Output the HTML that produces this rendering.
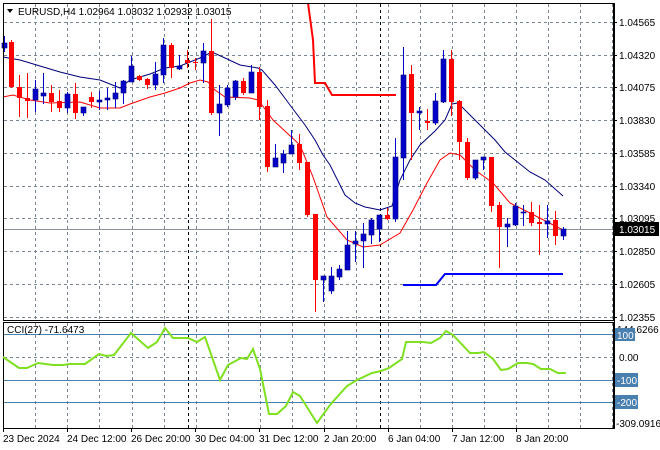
<!DOCTYPE html>
<html><head><meta charset="utf-8"><style>
html,body{margin:0;padding:0;background:#fff;width:660px;height:450px;overflow:hidden}
svg{display:block;font-family:"Liberation Sans",sans-serif;font-size:10px}
</style></head><body>
<svg id="s" width="660" height="450" xmlns="http://www.w3.org/2000/svg">
<rect width="660" height="450" fill="#fff"/>
<g id="grid" stroke="#7a8694" stroke-width="1" stroke-dasharray="3,3"></g>
<g id="seps" stroke="#000" stroke-width="1" stroke-dasharray="3,3"></g>
<line x1="3" y1="229.5" x2="614" y2="229.5" stroke="#8a939c"/>
<!-- MAs -->
<polyline fill="none" stroke="#00007a" stroke-width="1" points="3,57 20,60 40,66 60,72 80,77 100,80 115,86 120,88 130,80 150,74 165,68 180,66 200,58 212,52 225,58 240,65 258,68 262,70 275,85 290,105 305,125 315,140 323,155 330,165 340,185 345,195 355,203 365,207 380,210 392,206 400,180 410,160 420,145 435,131 445,120 452,104 458,103 470,115 485,130 495,140 505,152 515,160 530,172 545,180 563,196"/>
<polyline fill="none" stroke="#ff0000" stroke-width="1" points="3,97 13,95 30,100 50,103 80,102 100,108 120,108 130,104 150,97 165,93 180,88 190,83 200,80 208,82 215,90 225,97 250,98 258,100 262,105 273,120 287,133 300,145 313,177 327,217 347,240 363,247 380,245 400,233 413,210 427,183 440,160 450,153 460,155 475,170 493,183 510,203 530,213 563,230"/>
<polyline fill="none" stroke="#ff0000" stroke-width="2" points="308,3 313,40 315,83 325,83 332,95 396,95"/>
<polyline fill="none" stroke="#0000ff" stroke-width="2" points="403,285 436,285 445,274 563,274"/>
<g id="candles"></g>
<!-- frames -->
<rect x="3.5" y="3.5" width="610" height="317" fill="none" stroke="#000"/>
<rect x="3.5" y="322.5" width="610" height="106" fill="none" stroke="#000"/>
<line x1="614.5" y1="3" x2="614.5" y2="429" stroke="#000"/>
<!-- CCI levels -->
<line x1="4" y1="334.5" x2="613" y2="334.5" stroke="#4a80b0"/>
<line x1="4" y1="380.5" x2="613" y2="380.5" stroke="#4a80b0"/>
<line x1="4" y1="402.5" x2="613" y2="402.5" stroke="#4a80b0"/>
<line x1="4" y1="357.5" x2="613" y2="357.5" stroke="#7a8694" stroke-dasharray="3,3"/>
<polyline fill="none" stroke="#7fe020" stroke-width="2" points="3,357 19,368 27,368 38,363 53,365 63,365 70,364 85,364 99,354 106,356 114,355 131,333 148,348 157,342 165,328 173,338 188,338 197,342 205,337 220,380 228,365 241,358 247,359 253,349 260,369 269,414 277,414 286,406 293,392 300,396 317,423 330,405 347,386 357,380 372,373 381,371 389,368 402,359 406,342 423,342 431,343 440,338 446,331 453,335 470,353 478,353 484,352 493,359 501,370 508,369 518,363 527,363 533,364 541,369 550,369 558,373 566,373"/>
<text x="7" y="333" fill="#000">CCI(27) -71.6473</text>
<!-- title -->
<path d="M7,9 L13,9 L10,13 Z" fill="#000"/>
<text x="18" y="15" fill="#000">EURUSD,H4  1.02964 1.03032 1.02932 1.03015</text>
<!-- price axis -->
<g fill="#000" id="pax"></g>
<rect x="615" y="222" width="44" height="14" fill="#000"/>
<text x="619" y="233" fill="#fff">1.03015</text>
<text x="617" y="333" fill="#000">144.6266</text>
<text x="619" y="361" fill="#000">0.00</text>
<rect x="615" y="373" width="23" height="14" fill="#4a80b0"/><text x="617" y="384" fill="#fff">-100</text>
<rect x="615" y="395" width="23" height="14" fill="#4a80b0"/><text x="617" y="406" fill="#fff">-200</text>
<rect x="615" y="328" width="20" height="13" fill="#4a80b0"/><text x="617" y="339" fill="#fff">100</text>
<text x="616" y="427" fill="#000">-309.0916</text>
<g id="dax" fill="#000"></g>
</svg>
<script>
var NS="http://www.w3.org/2000/svg";
function el(p,t,a,txt){var e=document.createElementNS(NS,t);for(var k in a)e.setAttribute(k,a[k]);if(txt)e.textContent=txt;document.getElementById(p).appendChild(e);}
var hy=[22,55,87,120,153,186,218,251,284,317];
hy.forEach(function(y){el("grid","line",{x1:4,x2:613,y1:y+.5,y2:y+.5});});
var vx=[35,67,99,132,164,196,228,260,292,324,356,388,420,452,484,516,548,580,612];
vx.forEach(function(x){el("grid","line",{x1:x+.5,x2:x+.5,y1:4,y2:320});el("grid","line",{x1:x+.5,x2:x+.5,y1:323,y2:428});});
[188,380].forEach(function(x){el("seps","line",{x1:x+.5,x2:x+.5,y1:4,y2:320});el("seps","line",{x1:x+.5,x2:x+.5,y1:323,y2:428});});
var pl=["1.04565","1.04320","1.04075","1.03830","1.03585","1.03340","1.03095","1.02850","1.02605","1.02355"];
pl.forEach(function(t,i){el("pax","text",{x:619,y:hy[i]+4},t);el("pax","line",{x1:614,x2:617,y1:hy[i]+.5,y2:hy[i]+.5,stroke:"#000"});});
var dl=[[3,"23 Dec 2024"],[67,"24 Dec 12:00"],[131,"26 Dec 20:00"],[195,"30 Dec 04:00"],[259,"31 Dec 12:00"],[324,"2 Jan 20:00"],[388,"6 Jan 04:00"],[452,"7 Jan 12:00"],[516,"8 Jan 20:00"]];
dl.forEach(function(d){el("dax","text",{x:d[0],y:442},d[1]);el("dax","line",{x1:d[0]+.5,x2:d[0]+.5,y1:429,y2:432,stroke:"#000"});});
// x, bodyTop, bodyBot, wickTop, wickBot, color(b/r)
var C=[[4,43,48,36,52,"b"],[11,42,87,40,88,"r"],[19,87,98,75,117,"r"],[27,98,101,73,118,"r"],[35,89,100,80,112,"b"],[43,93,96,73,104,"b"],[51,93,102,85,112,"r"],[59,101,108,90,112,"r"],[67,94,108,92,113,"b"],[75,94,113,83,119,"r"],[83,107,113,107,116,"b"],[91,97,102,92,108,"r"],[99,100,102,91,110,"b"],[107,98,100,88,110,"b"],[115,93,99,82,108,"b"],[123,81,93,80,104,"b"],[131,66,82,56,82,"b"],[139,76,80,75,81,"r"],[147,79,85,78,89,"r"],[155,74,85,62,90,"b"],[163,45,75,38,83,"b"],[171,45,68,43,78,"r"],[179,66,69,55,70,"b"],[187,60,63,50,68,"r"],[195,62,63,58,70,"r"],[203,51,63,43,83,"b"],[211,51,113,19,115,"r"],[219,104,113,85,136,"b"],[227,88,105,85,107,"b"],[235,81,97,80,100,"b"],[243,81,93,78,95,"r"],[251,72,93,65,93,"b"],[259,72,107,67,120,"r"],[267,106,167,100,172,"r"],[275,158,167,144,167,"b"],[283,154,163,150,173,"b"],[291,145,154,130,154,"b"],[299,144,163,134,170,"r"],[307,162,215,162,217,"r"],[315,214,280,214,312,"r"],[323,276,280,276,302,"b"],[331,276,291,267,294,"b"],[339,269,277,265,280,"b"],[347,245,270,231,270,"b"],[355,241,244,231,262,"b"],[363,234,241,223,268,"b"],[371,220,235,218,244,"b"],[379,215,229,215,242,"b"],[387,215,219,208,220,"r"],[395,157,219,138,222,"b"],[403,75,158,47,180,"b"],[411,74,113,65,160,"r"],[419,111,113,107,130,"b"],[427,121,123,109,130,"r"],[435,101,123,93,125,"b"],[443,59,102,50,103,"b"],[451,59,102,50,116,"r"],[459,101,142,100,160,"r"],[467,142,178,138,180,"r"],[475,160,178,160,180,"b"],[483,157,160,157,170,"b"],[491,157,206,157,212,"r"],[499,205,227,202,268,"r"],[507,224,227,218,247,"b"],[515,206,225,203,226,"b"],[523,212,213,205,226,"b"],[531,212,223,202,226,"r"],[539,222,224,205,255,"r"],[547,221,224,205,238,"b"],[555,220,236,211,245,"r"],[563,229,236,227,240,"b"]];
C.forEach(function(c){var col=c[5]=="r"?"#ff0000":"#0000c8";
el("candles","line",{x1:c[0]+.5,x2:c[0]+.5,y1:c[3],y2:c[4],stroke:col});
var h=Math.max(1,c[2]-c[1]);
el("candles","rect",{x:c[0]-2,y:c[1],width:5,height:h,fill:col,stroke:c[5]=="r"?"none":"#000080","stroke-width":c[5]=="r"?0:0.6});});
</script>
</body></html>
